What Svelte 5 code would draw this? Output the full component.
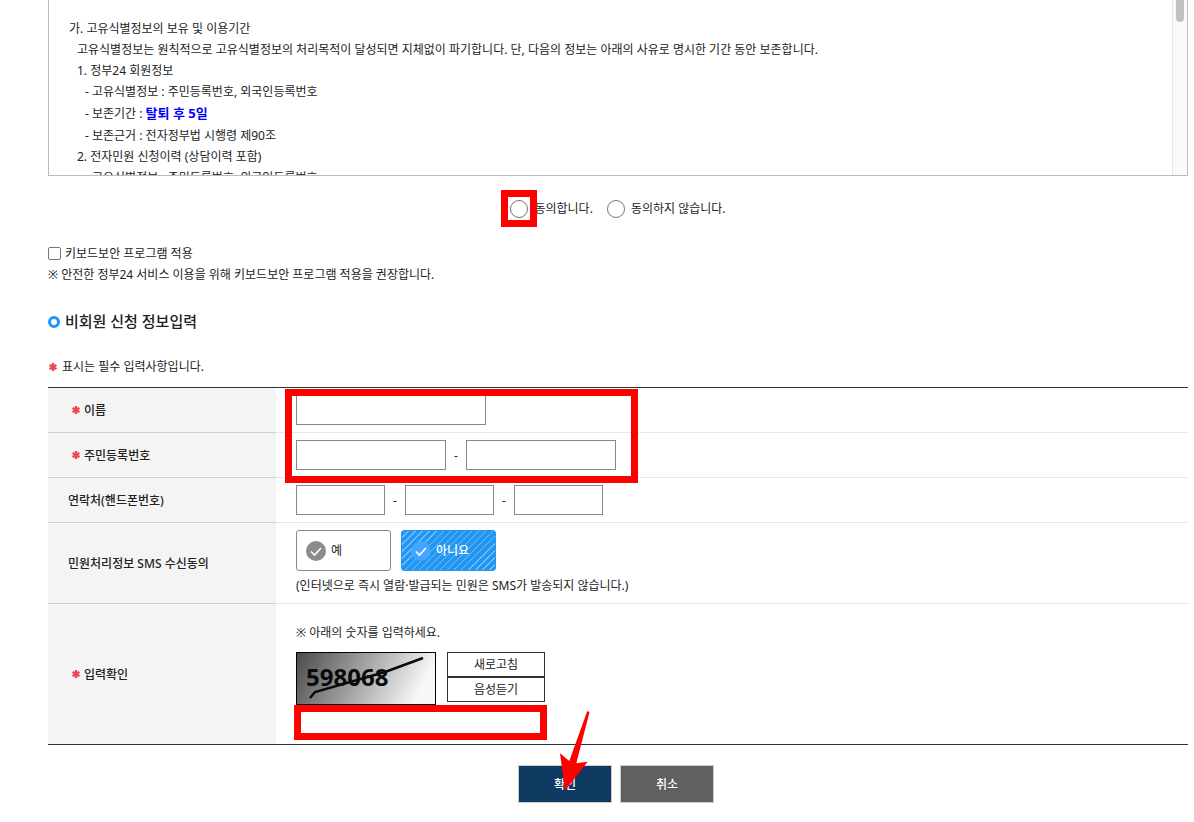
<script>
  let agree = '';
  let keyboardSecurity = false;
  let name = '';
  let smsAgree = 'no';

  const terms = [
    { depth: 0, text: '가. 고유식별정보의 보유 및 이용기간' },
    { depth: 1, text: '고유식별정보는 원칙적으로 고유식별정보의 처리목적이 달성되면 지체없이 파기합니다. 단, 다음의 정보는 아래의 사유로 명시한 기간 동안 보존합니다.' },
    { depth: 1, text: '1. 정부24 회원정보' },
    { depth: 2, text: '- 고유식별정보 : 주민등록번호, 외국인등록번호' },
    { depth: 2, text: '- 보존기간 : ', strong: '탈퇴 후 5일' },
    { depth: 2, text: '- 보존근거 : 전자정부법 시행령 제90조' },
    { depth: 1, text: '2. 전자민원 신청이력 (상담이력 포함)' },
    { depth: 2, text: '- 고유식별정보 : 주민등록번호, 외국인등록번호' }
  ];
</script>

{#snippet star()}
  <svg class="star" viewBox="0 0 8 8" aria-hidden="true">
    <path d="M4 0v8M0.5 2l7 4M0.5 6l7-4" stroke="#ef4550" stroke-width="2.4" />
  </svg>
{/snippet}

{#snippet check()}
  <svg class="check" viewBox="0 0 20 20" aria-hidden="true">
    <circle cx="10" cy="10" r="10" />
    <path d="M5 10.5l3.5 3.5 6.5-7" fill="none" stroke="#fff" stroke-width="1.6" />
  </svg>
{/snippet}

<main class="page">
  <section class="terms">
    <div class="terms-body">
      {#each terms as line}
        <p class="depth-{line.depth}" class:period={line.strong}>{line.text}{#if line.strong}<strong>{line.strong}</strong>{/if}</p>
      {/each}
    </div>
    <div class="scroll-track"><div class="scroll-thumb"></div></div>
  </section>

  <div class="agree-row">
    <label>
      <span class="radio-wrap">
        <input type="radio" name="agree" value="yes" bind:group={agree} />
        <span class="mark mark-radio"></span>
      </span>
      동의합니다.
    </label>
    <label>
      <input type="radio" name="agree" value="no" bind:group={agree} />
      동의하지 않습니다.
    </label>
  </div>

  <div class="security">
    <label>
      <input type="checkbox" bind:checked={keyboardSecurity} />
      키보드보안 프로그램 적용
    </label>
    <p>※ 안전한 정부24 서비스 이용을 위해 키보드보안 프로그램 적용을 권장합니다.</p>
  </div>

  <h2>비회원 신청 정보입력</h2>
  <p class="required">{@render star()}표시는 필수 입력사항입니다.</p>

  <form on:submit|preventDefault>
    <div class="table-wrap">
      <table>
        <tbody>
          <tr>
            <th scope="row"><label class="must" for="name">{@render star()}이름</label></th>
            <td><input class="text w-name" id="name" type="text" bind:value={name} /></td>
          </tr>
          <tr>
            <th scope="row"><label class="must" for="rrn1">{@render star()}주민등록번호</label></th>
            <td>
              <div class="fields">
                <input class="text w-rrn" id="rrn1" type="text" maxlength="6" />
                <span class="dash">-</span>
                <input class="text w-rrn" type="password" maxlength="7" aria-label="주민등록번호 뒷자리" />
              </div>
            </td>
          </tr>
          <tr>
            <th scope="row"><label for="tel1">연락처(핸드폰번호)</label></th>
            <td>
              <div class="fields">
                <input class="text w-tel" id="tel1" type="text" maxlength="3" />
                <span class="dash">-</span>
                <input class="text w-tel" type="text" maxlength="4" aria-label="연락처 가운데자리" />
                <span class="dash">-</span>
                <input class="text w-tel" type="text" maxlength="4" aria-label="연락처 뒷자리" />
              </div>
            </td>
          </tr>
          <tr>
            <th scope="row">민원처리정보 SMS 수신동의</th>
            <td>
              <div class="choices">
                <label class="choice" class:on={smsAgree === 'yes'}>
                  <input type="radio" name="sms" value="yes" bind:group={smsAgree} />
                  {@render check()}<span>예</span>
                </label>
                <label class="choice" class:on={smsAgree === 'no'}>
                  <input type="radio" name="sms" value="no" bind:group={smsAgree} />
                  {@render check()}<span>아니요</span>
                </label>
              </div>
              <p class="sms-note">(인터넷으로 즉시 열람·발급되는 민원은 SMS가 발송되지 않습니다.)</p>
            </td>
          </tr>
          <tr>
            <th scope="row"><label class="must" for="captcha">{@render star()}입력확인</label></th>
            <td class="captcha-cell">
              <p>※ 아래의 숫자를 입력하세요.</p>
              <div class="captcha">
                <svg class="captcha-img" viewBox="0 0 140 53" role="img" aria-label="자동입력 방지 숫자">
                  <defs>
                    <linearGradient id="cap" x1="0" y1="0" x2="1" y2="0.2">
                      <stop offset="0" stop-color="#4a4a4a" />
                      <stop offset="0.5" stop-color="#a0a0a0" />
                      <stop offset="1" stop-color="#f8f8f8" />
                    </linearGradient>
                  </defs>
                  <rect x="0.5" y="0.5" width="139" height="52" fill="url(#cap)" stroke="#000" />
                  <text x="10" y="34">598068</text>
                  <path d="M14 46l5-6 70-20 38-14" fill="none" stroke="#0a0a0a" stroke-width="2.4" />
                </svg>
                <div class="captcha-buttons">
                  <button type="button">새로고침</button>
                  <button type="button">음성듣기</button>
                </div>
              </div>
              <div class="captcha-input">
                <input class="text" id="captcha" type="text" />
                <span class="mark mark-captcha"></span>
              </div>
            </td>
          </tr>
        </tbody>
      </table>
      <span class="mark mark-name"></span>
    </div>

    <div class="actions">
      <button class="btn confirm" type="submit">
        확인
        <svg class="arrow" viewBox="556 709 36 82" aria-hidden="true">
          <path d="M587.3 711l2.2 1.2L576.3 763.3l11.4-1.6L565 790.5l-5-37.2 9.3 7.7z" fill="#f00" />
        </svg>
      </button>
      <button class="btn cancel" type="button">취소</button>
    </div>
  </form>
</main>

<style>
  :global(body) {
    margin: 0;
    background: #fff;
  }
  .page, .page button, .page input {
    font-family: 'Noto Sans', 'Noto Sans CJK KR', sans-serif;
    font-size: 12px; line-height: 21px; color: #222;
    box-sizing: border-box;
  }
  .page { padding: 0 6px 16px 48px; }
  p { margin: 0; }

  /* Terms */
  .terms {
    display: flex; height: 176px; box-sizing: border-box;
    border: 1px solid #bbb; border-top: 0; overflow: hidden;
  }
  .terms-body { flex: 1; padding: 18px 20px 0; overflow: hidden; }
  .depth-1 { padding-left: 8px; }
  .depth-2 { padding-left: 16px; }
  .period { line-height: 23px; }
  .terms strong { color: #00f; font-size: 13px; }
  .scroll-track {
    width: 14px; background: #fafafa; border-left: 1px solid #e6e6e6;
  }
  .scroll-thumb {
    width: 8px; height: 22px; margin: 0 auto;
    background: #c1c1c1; border-radius: 0 0 4px 4px;
  }

  /* Agreement */
  .agree-row {
    display: flex; justify-content: center; gap: 14px;
    padding: 22px 0 24px;
  }
  .agree-row label { display: flex; align-items: center; gap: 6px; }
  .agree-row input {
    appearance: none; display: block; width: 18px; height: 18px; margin: 0;
    border: 1px solid #767676; border-radius: 50%; background: #fff;
  }
  .agree-row input:checked { border: 5px solid #2196f3; }
  .radio-wrap { position: relative; }
  .mark {
    position: absolute; box-sizing: border-box;
    border: 7px solid #f00; pointer-events: none;
  }
  .mark-radio { inset: -10px -9px -9px; }

  .security label { display: flex; align-items: center; gap: 4px; }
  .security input {
    appearance: none; width: 13px; height: 13px; margin: 0;
    border: 1px solid #767676; border-radius: 2px;
  }
  .security input:checked { background: #2196f3; }

  h2 {
    display: flex; align-items: center; gap: 5px;
    margin: 26px 0 24px; font-size: 15px; line-height: 21px; font-weight: 500;
  }
  h2::before {
    content: ''; width: 12px; height: 12px; box-sizing: border-box;
    border: 3px solid #2196f3; border-radius: 50%;
  }
  .star { width: 8px; height: 8px; }
  .required { display: flex; align-items: center; gap: 5px; padding-left: 1px; }

  /* Form table */
  .table-wrap { position: relative; margin-top: 10px; }
  table {
    width: 100%; border-collapse: separate; border-spacing: 0;
    border-top: 1px solid #333; border-bottom: 1px solid #333;
  }
  th {
    width: 228px; box-sizing: border-box; padding: 0 20px;
    background: #f4f4f4; border-bottom: 1px solid #d0d0d0;
    text-align: left; font-weight: 500;
  }
  td { padding: 7px 20px; border-bottom: 1px solid #e8e8e8; }
  tr:last-child th, tr:last-child td { border-bottom: 0; }
  .must { display: flex; align-items: center; gap: 4px; padding-left: 4px; }
  .text {
    display: block; height: 30px; padding: 0 6px;
    border: 1px solid #888; border-radius: 0; background: #fff;
  }
  .w-name { width: 190px; }
  .w-rrn { width: 150px; }
  .w-tel { width: 89px; }
  .fields { display: flex; align-items: center; }
  .dash { width: 20px; text-align: center; }

  .choices { display: flex; gap: 10px; }
  .choice {
    position: relative; display: flex; align-items: center; gap: 5px;
    width: 95px; height: 41px; box-sizing: border-box; padding: 0 9px;
    border: 1px solid #888; border-radius: 3px;
  }
  .choice input { position: absolute; inset: 0; margin: 0; opacity: 0; }
  .check { width: 20px; height: 20px; fill: #8c8c8c; }
  .choice.on {
    border-color: #2196f3; color: #fff; font-weight: 500;
    background: repeating-linear-gradient(135deg, #2196f3 0 4px, #74bdf8 4px 5px);
  }
  .choice.on .check { fill: #42a5ff; }
  .sms-note { margin-top: 4px; }

  .captcha-cell { padding: 18px 20px 8px; }
  .captcha { display: flex; gap: 11px; margin-top: 9px; }
  .captcha-img { width: 140px; height: 53px; }
  .captcha-img text {
    font-family: 'Noto Sans', sans-serif;
    font-size: 24px; font-weight: 700; fill: #0a0a0a;
  }
  .captcha-buttons { display: flex; flex-direction: column; }
  .captcha-buttons button {
    width: 98px; height: 25px; padding: 0;
    border: 1px solid #333; background: #fff;
  }
  .captcha-input { position: relative; width: 249px; margin-top: 1px; }
  .captcha-input .text { width: 100%; }
  .mark-captcha { inset: -1px -2px -4px; }
  .mark-name { left: 237px; top: 2px; width: 353px; height: 94px; }

  /* Buttons */
  .actions {
    display: flex; justify-content: center; gap: 8px;
    margin-top: 20px; padding-right: 4px;
  }
  .page .btn {
    position: relative; width: 94px; height: 38px; padding: 0;
    border: 1px solid #ccc; color: #fff; font-weight: 500;
  }
  .confirm { background: #0f3a62; }
  .cancel { background: #606060; }
  .arrow { position: absolute; left: 37px; top: -57px; width: 36px; height: 82px; }
</style>
